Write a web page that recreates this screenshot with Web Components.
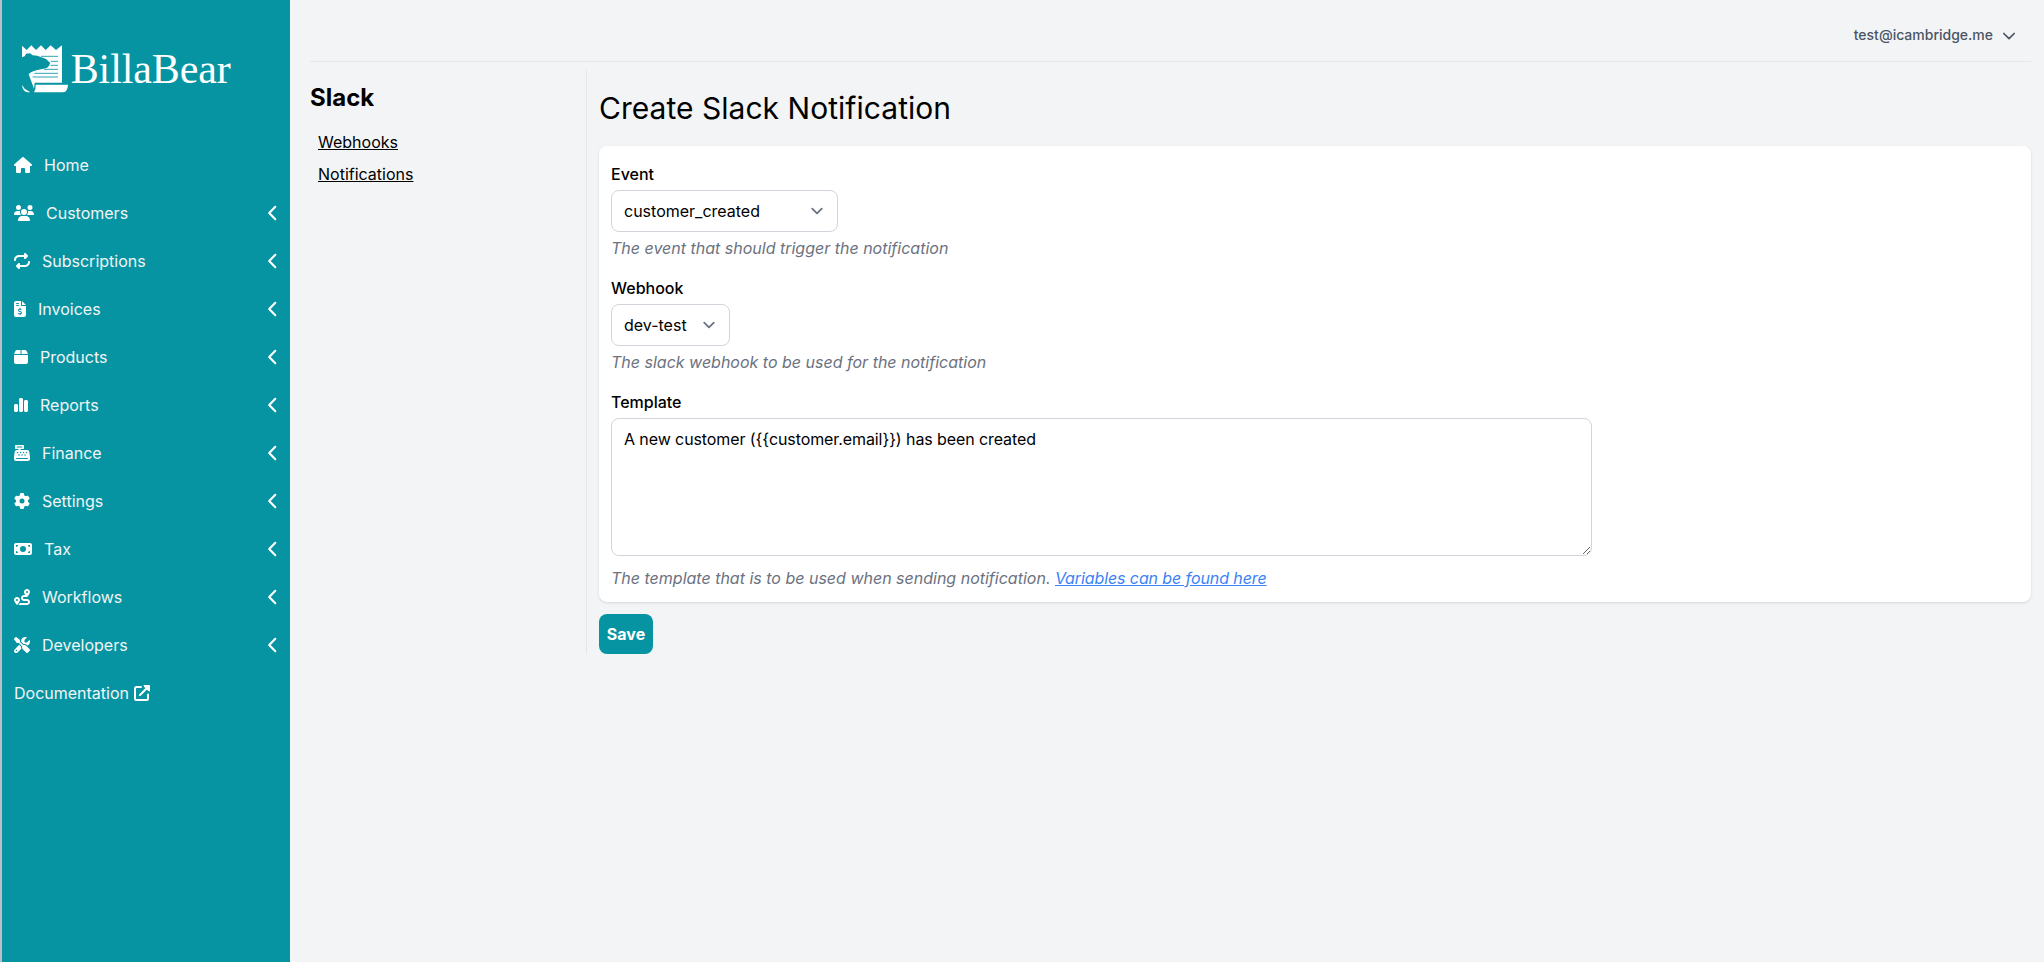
<!DOCTYPE html>
<html lang="en">
<head>
<meta charset="utf-8">
<title>BillaBear</title>
<style>
html,body{margin:0;height:100%}
body{font:16px/24px Inter,"Liberation Sans",sans-serif;color:#000;background:#f3f4f6;overflow:hidden}
</style>
</head>
<body>
<app-shell>
  <side-bar slot="side">
    <nav-item icon="house" leaf>Home</nav-item>
    <nav-item icon="users">Customers</nav-item>
    <nav-item icon="repeat">Subscriptions</nav-item>
    <nav-item icon="invoice">Invoices</nav-item>
    <nav-item icon="box">Products</nav-item>
    <nav-item icon="chart">Reports</nav-item>
    <nav-item icon="register">Finance</nav-item>
    <nav-item icon="gear">Settings</nav-item>
    <nav-item icon="money">Tax</nav-item>
    <nav-item icon="route">Workflows</nav-item>
    <nav-item icon="tools">Developers</nav-item>
    <doc-link>Documentation</doc-link>
  </side-bar>
  <user-menu slot="top">test@icambridge.me</user-menu>
  <sub-menu slot="menu" heading="Slack"><span>Webhooks</span><span>Notifications</span></sub-menu>
  <page-title>Create Slack Notification</page-title>
  <form-card>
    <form-field label="Event"><select-box style="width:227px">customer_created</select-box><span slot="help">The event that should trigger the notification</span></form-field>
    <form-field label="Webhook"><select-box style="width:119px">dev-test</select-box><span slot="help">The slack webhook to be used for the notification</span></form-field>
    <form-field label="Template" tall><text-area>A new customer ({{customer.email}}) has been created</text-area><span slot="help">The template that is to be used when sending notification. <text-link>Variables can be found here</text-link></span></form-field>
  </form-card>
  <save-button>Save</save-button>
</app-shell>
<script>
const ICONS={
house:[576,"M575.8 255.5c0 18-15 32.1-32 32.1h-32l.7 160.2c0 2.7-.2 5.4-.5 8.1V472c0 22.1-17.9 40-40 40H456c-1.1 0-2.2 0-3.3-.1c-1.4 .1-2.8 .1-4.2 .1H416 392c-22.1 0-40-17.9-40-40V448 384c0-17.7-14.3-32-32-32H256c-17.7 0-32 14.3-32 32v64 24c0 22.1-17.9 40-40 40H160 128.1c-1.5 0-3-.1-4.5-.2c-1.2 .1-2.4 .2-3.6 .2H104c-22.1 0-40-17.9-40-40V360c0-.9 0-1.9 .1-2.8V287.6H32c-18 0-32-14-32-32.1c0-9 3-17 10-24L266.4 8c7-7 15-8 22-8s15 2 21 7L564.8 231.5c8 7 12 15 11 24z"],
users:[640,"M144 0a80 80 0 1 1 0 160A80 80 0 1 1 144 0zM512 0a80 80 0 1 1 0 160A80 80 0 1 1 512 0zM0 298.7C0 239.8 47.8 192 106.7 192h42.7c15.9 0 31 3.5 44.6 9.7c-1.3 7.2-1.9 14.7-1.9 22.3c0 38.2 16.8 72.5 43.3 96c-.2 0-.4 0-.7 0H21.3C9.6 320 0 310.4 0 298.7zM405.3 320c-.2 0-.4 0-.7 0c26.6-23.5 43.3-57.8 43.3-96c0-7.6-.7-15-1.9-22.3c13.6-6.3 28.7-9.7 44.6-9.7h42.7C592.2 192 640 239.8 640 298.7c0 11.8-9.6 21.3-21.3 21.3H405.3zM224 224a96 96 0 1 1 192 0 96 96 0 1 1 -192 0zM128 485.3C128 411.7 187.7 352 261.3 352H378.7C452.3 352 512 411.7 512 485.3c0 14.7-11.9 26.7-26.7 26.7H154.7c-14.7 0-26.7-11.9-26.7-26.7z"],
repeat:[512,"M0 224c0 17.7 14.3 32 32 32s32-14.3 32-32c0-53 43-96 96-96H320v32c0 12.9 7.8 24.6 19.8 29.6s25.7 2.2 34.9-6.9l64-64c12.5-12.5 12.5-32.8 0-45.3l-64-64c-9.2-9.2-22.9-11.9-34.9-6.9S320 19.1 320 32V64H160C71.6 64 0 135.6 0 224zm512 64c0-17.7-14.3-32-32-32s-32 14.3-32 32c0 53-43 96-96 96H192V352c0-12.9-7.8-24.6-19.8-29.6s-25.7-2.2-34.9 6.9l-64 64c-12.5 12.5-12.5 32.8 0 45.3l64 64c9.2 9.2 22.9 11.9 34.9 6.9s19.8-16.6 19.8-29.6V448H352c88.4 0 160-71.6 160-160z"],
invoice:[384,"M64 0C28.7 0 0 28.7 0 64V448c0 35.3 28.7 64 64 64H320c35.3 0 64-28.7 64-64V160H256c-17.7 0-32-14.3-32-32V0H64zM256 0V128H384L256 0zM64 80c0-8.8 7.2-16 16-16h64c8.8 0 16 7.2 16 16s-7.2 16-16 16H80c-8.8 0-16-7.2-16-16zm0 64c0-8.8 7.2-16 16-16h64c8.8 0 16 7.2 16 16s-7.2 16-16 16H80c-8.8 0-16-7.2-16-16zm128 72c8.8 0 16 7.2 16 16v17.3c8.5 1.2 16.7 3.1 24.1 5.1c8.5 2.3 13.6 11 11.3 19.6s-11 13.6-19.6 11.3c-11.1-3-22-5.2-32.1-5.3c-8.4-.1-17.4 1.8-23.6 5.5c-5.7 3.4-8.1 7.3-8.1 12.8c0 3.7 1.3 6.5 7.3 10.1c6.9 4.1 16.6 7.1 29.2 10.9l.5 .1c11.3 3.4 25.3 7.6 36.3 14.6c12.1 7.6 22.4 19.7 22.7 38.2c.3 19.3-9.6 33.3-22.9 41.6c-7.7 4.8-16.4 7.6-25.1 9.1V440c0 8.8-7.2 16-16 16s-16-7.2-16-16V422.2c-11.2-2.1-21.7-5.7-30.9-8.9c-2.1-.7-4.2-1.4-6.2-2.1c-8.4-2.8-12.9-11.9-10.1-20.2s11.9-12.9 20.2-10.1c2.5 .8 4.8 1.6 7.1 2.4c13.6 4.6 24.6 8.4 36.3 8.7c9.1 .3 17.9-1.7 23.7-5.3c5.1-3.2 7.9-7.3 7.8-14c-.1-4.6-1.8-7.8-7.7-11.6c-6.8-4.3-16.5-7.4-29-11.2l-1.6-.5c-11-3.3-24.3-7.3-34.8-13.7c-12-7.2-22.6-18.9-22.7-37.3c-.1-19.4 10.8-32.8 23.8-40.5c7.5-4.4 15.8-7.2 24.1-8.7V232c0-8.8 7.2-16 16-16z"],
box:[448,"M50.7 58.5L0 160H208V32H93.7C75.5 32 58.9 42.3 50.7 58.5zM240 160H448L397.3 58.5C389.1 42.3 372.5 32 354.3 32H240V160zm208 32H0V416c0 35.3 28.7 64 64 64H384c35.3 0 64-28.7 64-64V192z"],
chart:[448,"M160 80c0-26.5 21.5-48 48-48h32c26.5 0 48 21.5 48 48V432c0 26.5-21.5 48-48 48H208c-26.5 0-48-21.5-48-48V80zM0 272c0-26.5 21.5-48 48-48H80c26.5 0 48 21.5 48 48V432c0 26.5-21.5 48-48 48H48c-26.5 0-48-21.5-48-48V272zM368 96h32c26.5 0 48 21.5 48 48V432c0 26.5-21.5 48-48 48H368c-26.5 0-48-21.5-48-48V144c0-26.5 21.5-48 48-48z"],
register:[512,"M64 0C46.3 0 32 14.3 32 32V96c0 17.7 14.3 32 32 32h80v32H87c-31.6 0-58.5 23.1-63.3 54.4L1.1 364.1C.4 368.8 0 373.6 0 378.4V448c0 35.3 28.7 64 64 64H448c35.3 0 64-28.7 64-64V378.4c0-4.8-.4-9.6-1.1-14.4L488.2 214.4C483.5 183.1 456.6 160 425 160H208V128h80c17.7 0 32-14.3 32-32V32c0-17.7-14.3-32-32-32H64zM96 48H256c8.8 0 16 7.2 16 16s-7.2 16-16 16H96c-8.8 0-16-7.2-16-16s7.2-16 16-16zM64 432c0-8.8 7.2-16 16-16H432c8.8 0 16 7.2 16 16s-7.2 16-16 16H80c-8.8 0-16-7.2-16-16zm48-168a24 24 0 1 1 0-48 24 24 0 1 1 0 48zm120-24a24 24 0 1 1 -48 0 24 24 0 1 1 48 0zM160 344a24 24 0 1 1 0-48 24 24 0 1 1 0 48zM328 240a24 24 0 1 1 -48 0 24 24 0 1 1 48 0zM256 344a24 24 0 1 1 0-48 24 24 0 1 1 0 48zM424 240a24 24 0 1 1 -48 0 24 24 0 1 1 48 0zM352 344a24 24 0 1 1 0-48 24 24 0 1 1 0 48z"],
gear:[512,"M495.9 166.6c3.2 8.7 .5 18.4-6.4 24.6l-43.3 39.4c1.1 8.3 1.7 16.8 1.7 25.4s-.6 17.1-1.7 25.4l43.3 39.4c6.9 6.2 9.6 15.9 6.4 24.6c-4.4 11.9-9.7 23.3-15.8 34.3l-4.7 8.1c-6.6 11-14 21.4-22.1 31.2c-5.9 7.2-15.7 9.6-24.5 6.8l-55.7-17.7c-13.4 10.3-28.2 18.9-44 25.4l-12.5 57.1c-2 9.1-9 16.3-18.2 17.8c-13.8 2.3-28 3.5-42.5 3.5s-28.7-1.2-42.5-3.5c-9.2-1.5-16.2-8.7-18.2-17.8l-12.5-57.1c-15.8-6.5-30.6-15.1-44-25.4L83.1 425.9c-8.8 2.8-18.6 .3-24.5-6.8c-8.1-9.8-15.5-20.2-22.1-31.2l-4.7-8.1c-6.1-11-11.4-22.4-15.8-34.3c-3.2-8.7-.5-18.4 6.4-24.6l43.3-39.4C64.6 273.1 64 264.6 64 256s.6-17.1 1.7-25.4L22.4 191.2c-6.9-6.2-9.6-15.9-6.4-24.6c4.4-11.9 9.7-23.3 15.8-34.3l4.7-8.1c6.6-11 14-21.4 22.1-31.2c5.9-7.2 15.7-9.6 24.5-6.8l55.7 17.7c13.4-10.3 28.2-18.9 44-25.4l12.5-57.1c2-9.1 9-16.3 18.2-17.8C227.3 1.2 241.5 0 256 0s28.7 1.2 42.5 3.5c9.2 1.5 16.2 8.7 18.2 17.8l12.5 57.1c15.8 6.5 30.6 15.1 44 25.4l55.7-17.7c8.8-2.8 18.6-.3 24.5 6.8c8.1 9.8 15.5 20.2 22.1 31.2l4.7 8.1c6.1 11 11.4 22.4 15.8 34.3zM256 336a80 80 0 1 0 0-160 80 80 0 1 0 0 160z"],
money:[576,"M64 64C28.7 64 0 92.7 0 128V384c0 35.3 28.7 64 64 64H512c35.3 0 64-28.7 64-64V128c0-35.3-28.7-64-64-64H64zm64 320H64V320c35.3 0 64 28.7 64 64zM64 192V128h64c0 35.3-28.7 64-64 64zM448 384c0-35.3 28.7-64 64-64v64H448zm64-192c-35.3 0-64-28.7-64-64h64v64zM288 160a96 96 0 1 1 0 192 96 96 0 1 1 0-192z"],
route:[512,"M512 96c0 50.2-59.1 125.1-84.6 155c-3.8 4.4-9.4 6.1-14.5 5H320c-17.7 0-32 14.3-32 32s14.3 32 32 32h96c53 0 96 43 96 96s-43 96-96 96H139.6c8.7-9.9 19.3-22.6 30-36.8c6.3-8.4 12.8-17.6 19-27.2H416c17.7 0 32-14.3 32-32s-14.3-32-32-32H320c-53 0-96-43-96-96s43-96 96-96h39.8c-21-31.5-39.8-67.7-39.8-96c0-53 43-96 96-96s96 43 96 96zM117.1 489.1c-3.8 4.3-7.2 8.1-10.1 11.3l-1.8 2-.2-.2c-6 4.6-14.6 4-20-1.8C59.8 473 0 402.5 0 352c0-53 43-96 96-96s96 43 96 96c0 30-21.1 67-43.5 97.9c-10.7 14.7-21.7 28-30.8 38.5l-.6 .7zM128 352a32 32 0 1 0 -64 0 32 32 0 1 0 64 0zM416 128a32 32 0 1 0 0-64 32 32 0 1 0 0 64z"],
tools:[512,"M78.6 5C69.1-2.4 55.6-1.5 47 7L7 47c-8.5 8.5-9.4 22-2.1 31.6l80 104c4.5 5.9 11.6 9.4 19 9.4h54.1l109 109c-14.7 29-10 65.4 14.3 89.6l112 112c12.5 12.5 32.8 12.5 45.3 0l64-64c12.5-12.5 12.5-32.8 0-45.3l-112-112c-24.2-24.2-60.6-29-89.6-14.3l-109-109V104c0-7.5-3.5-14.5-9.4-19L78.6 5zM19.9 396.1C7.2 408.8 0 426.1 0 444.1C0 481.6 30.4 512 67.9 512c18 0 35.3-7.2 48-19.9L233.7 374.3c-7.8-20.9-9-43.6-3.6-65.1l-61.7-61.7L19.9 396.1zM512 144c0-10.5-1.1-20.7-3.2-30.5c-2.4-11.2-16.1-14.1-24.2-6l-63.9 63.9c-3 3-7.1 4.7-11.3 4.7H352c-8.8 0-16-7.2-16-16V102.6c0-4.2 1.7-8.3 4.7-11.3l63.9-63.9c8.1-8.1 5.2-21.8-6-24.2C388.7 1.1 378.5 0 368 0C288.5 0 224 64.5 224 144l0 .8 85.3 85.3c36-9.1 75.8 .5 104 28.7L429 274.5c49-23 83-72.8 83-130.5zM56 432a24 24 0 1 1 48 0 24 24 0 1 1 -48 0z"]
};
function define(name,render){
  customElements.define(name,class extends HTMLElement{
    constructor(){super();this.attachShadow({mode:"open"})}
    connectedCallback(){this.shadowRoot.innerHTML=render(this)}
  });
}
define("app-shell",()=>`<style>
:host{display:grid;grid-template-columns:290px 1fr;height:962px}
.main{padding:0 13px 0 20px;min-width:0}
header{height:61px;border-bottom:1px solid #e5e7eb;display:flex;justify-content:flex-end;padding-right:14px}
.cols{display:grid;grid-template-columns:276px 1fr;margin-top:8px;height:584px}
.content{border-left:1px solid #e5e7eb;padding-left:12px}
</style><slot name="side"></slot><div class="main"><header><slot name="top"></slot></header><div class="cols"><slot name="menu"></slot><div class="content"><slot></slot></div></div></div>`);
define("brand-logo",()=>`<style>:host{display:block;height:101px;padding:40px 0 0 16px;box-sizing:border-box}svg{display:block}text{font:42px "Liberation Serif",serif;fill:#fff}</style>
<svg width="230" height="60" viewBox="0 0 230 60"><g transform="translate(-18 -40) translate(0 20) scale(.33333)">
<path fill="#fff" d="M66 77L80 90 94 76 108 90 123 76 137 90 152 76 168 90 186 76V188H104L102 206 96 190 86 163Q90 156 112 150L138 145Q150 138 150 128L138 117 112 107 98 106 90 100 78 101 74 109 66 112Z"/>
<path stroke="#0694a2" stroke-width="2.500" d="M123 109h51M152 124h22M152 136h22M132 148h42M103 160h71M98 171h76"/>
<path fill="#fff" d="M107 194H204Q203 217 186 217H102Q108 207 107 194ZM66 194L74 206 91 217H82Q68 214 66 194Z"/></g>
<text x="52.700" y="43" textLength="160">BillaBear</text></svg>`);
define("side-bar",()=>`<style>:host{display:block;background:#0694a2;color:#f3f4f6;border-left:2px solid #b9bfc2}nav{margin-top:40px}</style><brand-logo></brand-logo><nav><slot></slot></nav>`);
define("nav-item",e=>{const [w,d]=ICONS[e.getAttribute("icon")];return `<style>:host{display:flex;align-items:center;height:48px;padding:0 13px 0 12px}.i{margin-right:12px;fill:#fff}.c{margin-left:auto}</style><svg class="i" width="${w/32}" height="16" viewBox="0 0 ${w} 512"><path d="${d}"/></svg><span><slot></slot></span>${e.hasAttribute("leaf")?"":`<svg class="c" width="10" height="16" viewBox="0 0 10 16"><path d="M8.3 1.8L2.2 8l6.1 6.2" fill="none" stroke="#fff" stroke-width="2.1" stroke-linecap="round" stroke-linejoin="round"/></svg>`}`});
define("doc-link",()=>`<style>:host{display:flex;align-items:center;height:48px;padding-left:12px}svg{margin-left:4px}</style><span><slot></slot></span><svg width="18" height="18" viewBox="0 0 18 18"><path d="M8 3H3.500Q2 3 2 4.500V14.500Q2 16 3.500 16H13.500Q15 16 15 14.500V10.500M7 11L15 3" fill="none" stroke="#fff" stroke-width="2" stroke-linecap="round"/><path fill="#fff" d="M10.500 1H16.200Q17 1 17 1.800V7.500L15 6.800 11 2.800Z"/></svg>`);
define("user-menu",()=>`<style>:host{display:flex;align-items:center;height:70px;font-size:14px;font-weight:500;color:#4b5563}svg{margin-left:8px}</style><slot></slot><svg width="16" height="16" viewBox="0 0 16 16"><path d="M2.800 6.500L8 11.700 13.200 6.500" fill="none" stroke="#4b5563" stroke-width="1.700" stroke-linecap="round" stroke-linejoin="round"/></svg>`);
define("sub-menu",e=>`<style>:host{display:block}h2{margin:12px 0 16px;font-size:24px;line-height:32px;font-weight:700}div{display:flex;flex-direction:column;padding-left:8px;gap:8px;text-decoration:underline}</style><h2>${e.getAttribute("heading")}</h2><div><slot></slot></div>`);
define("page-title",()=>`<style>:host{display:block;font-size:30px;line-height:36px;padding:20px 0;letter-spacing:.03px}</style><slot></slot>`);
define("form-card",()=>`<style>:host{display:block;box-sizing:border-box;height:456px;background:#fff;border-radius:8px;padding:16px 12px;box-shadow:0 1px 3px #0000001a,0 1px 2px -1px #0000001a}</style><slot></slot>`);
define("form-field",e=>`<style>:host{display:block;height:114px}label{display:block;font-weight:500;height:28px}.help{font-style:italic;color:#6b7280;margin-top:${e.hasAttribute("tall")?10:4}px}</style><label>${e.getAttribute("label")}</label><slot></slot><div class="help"><slot name="help"></slot></div>`);
define("select-box",()=>`<style>:host{display:flex;align-items:center;justify-content:space-between;box-sizing:border-box;height:42px;border:1px solid #d1d5db;border-radius:8px;padding:0 8px 0 12px}</style><span><slot></slot></span><svg width="24" height="24" viewBox="0 0 20 20"><path d="M6 8l4 4 4-4" fill="none" stroke="#6b7280" stroke-width="1.500" stroke-linecap="round" stroke-linejoin="round"/></svg>`);
define("text-area",e=>`<style>:host{display:block;box-sizing:border-box;width:981px;height:138px}textarea{display:block;box-sizing:border-box;width:100%;height:100%;border:1px solid #d1d5db;border-radius:8px;padding:8px 12px;font:inherit;letter-spacing:-.09px;color:#000;background:#fff}</style><textarea>${e.textContent}</textarea>`);
define("text-link",()=>`<style>:host{color:#3b82f6;text-decoration:underline;letter-spacing:-.1px}</style><slot></slot>`);
define("save-button",()=>`<style>:host{display:flex;width:54px;height:40px;margin-top:12px;align-items:center;justify-content:center;border-radius:8px;background:#0694a2;color:#fff;font-weight:700}</style><slot></slot>`);
</script>
</body>
</html>
